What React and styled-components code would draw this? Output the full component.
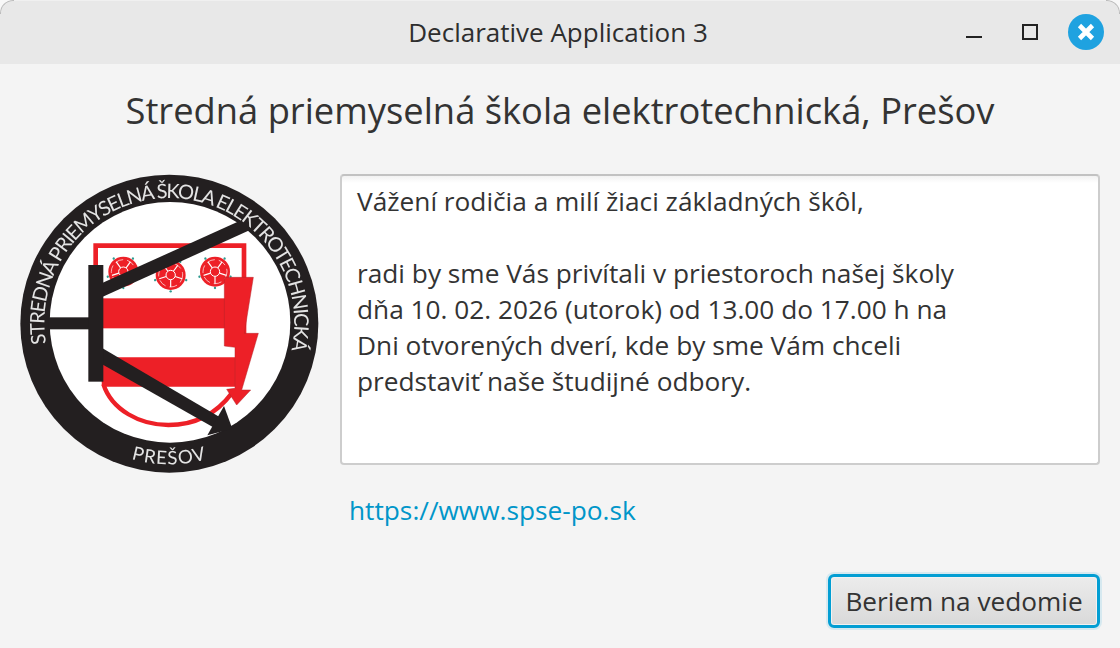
import React from 'react';
import styled, { createGlobalStyle } from 'styled-components';

const GlobalStyle = createGlobalStyle`
  html, body { margin: 0; padding: 0; background: #f8f8f8; }
  * { box-sizing: border-box; }
`;

const Window = styled.div`
  width: 1120px;
  height: 648px;
  display: flex;
  flex-direction: column;
  overflow: hidden;
  background: #f4f4f4;
  border-radius: 13px 13px 0 0;
  font-family: "Open Sans", "Noto Sans", sans-serif;
  color: #333333;
`;

const TitleBar = styled.header`
  position: relative;
  height: 64px;
  flex: none;
  display: grid;
  grid-template-columns: 1fr auto 1fr;
  align-items: center;
  background: #e8e8e8;
  border-top: 1px solid #f0f0f0;

  &::before,
  &::after {
    content: "";
    position: absolute;
    top: -1px;
    width: 13px;
    height: 13px;
    border-top: 1px solid #bbbbbb;
  }
  &::before {
    left: 0;
    border-left: 1px solid #bbbbbb;
    border-top-left-radius: 13px;
  }
  &::after {
    right: 0;
    border-right: 1px solid #bbbbbb;
    border-top-right-radius: 13px;
  }
`;

const WindowTitle = styled.h1`
  grid-column: 2;
  margin: 0 4px 1px 0;
  font-size: 26px;
  font-weight: 400;
  color: #2e2e2e;
`;

const Controls = styled.div`
  grid-column: 3;
  display: flex;
  align-items: center;
  justify-content: flex-end;
  padding-right: 16px;
  margin-bottom: 1px;
`;

const MinimizeButton = styled.span`
  width: 16px;
  height: 2px;
  margin: 9px 40px 0 0;
  background: #222222;
`;

const MaximizeButton = styled.span`
  width: 16px;
  height: 16px;
  margin-right: 30px;
  border: 2px solid #222222;
`;

const CloseButton = styled.span`
  width: 36px;
  height: 36px;
  display: flex;
  align-items: center;
  justify-content: center;
  border-radius: 50%;
  background: #1fa2e0;
`;

const Content = styled.main`
  flex: 1;
  display: flex;
  flex-direction: column;
  padding: 22px 20px 20px;
`;

const Heading = styled.h2`
  margin: 0 0 40px;
  height: 48px;
  line-height: 48px;
  text-align: center;
  font-size: 36.3px;
  font-weight: 400;
  color: #333333;
  white-space: nowrap;
`;

const Body = styled.section`
  display: flex;
  align-items: flex-start;
  gap: 20px;
`;

const Logo = styled.svg`
  width: 300px;
  height: 300px;
  flex: none;
  filter: blur(0.45px);
`;

const Message = styled.div`
  width: 760px;
  height: 291px;
  padding: 7px 15px;
  background: linear-gradient(#f2f2f2 0, #ffffff 7px);
  border: 2px solid #cdcdcd;
  border-top-color: #c2c2c2;
  border-radius: 4px;
  font-size: 26.25px;
  line-height: 36px;
  color: #333333;
`;

const MessageLine = styled.div`
  height: 36px;
  white-space: nowrap;
`;

const LinkRow = styled.div`
  margin-top: 18px;
  padding-left: 329px;
  height: 36px;
  line-height: 36px;
`;

const SchoolLink = styled.a`
  font-size: 26.25px;
  color: #0096c9;
  text-decoration: none;
`;

const Footer = styled.footer`
  margin-top: auto;
  display: flex;
  justify-content: flex-end;
`;

const AckButton = styled.button`
  width: 272px;
  height: 54px;
  padding: 0;
  border: 3px solid #039ed3;
  border-radius: 6px;
  background: linear-gradient(#ececec, #d9d9d9);
  box-shadow: 0 0 0 2px rgba(3, 158, 211, 0.12), inset 0 0 0 1px #f2f2f2;
  font-family: inherit;
  font-size: 26.2px;
  color: #333333;
`;

const RED = '#ed2027';
const INK = '#231f20';

// one heraldic rose of the school crest, drawn around 0,0
function Rose({ x, y }) {
  const angles = [0, 72, 144, 216, 288];
  return (
    <g transform={`translate(${x} ${y})`}>
      <circle r="45" fill={RED} />
      {angles.map((a) => (
        <line key={a} x1="0" y1="-14" x2="0" y2="-36" stroke="#fff" strokeWidth="3.5" transform={`rotate(${a + 36})`} />
      ))}
      <circle r="36" fill="none" stroke="#fff" strokeWidth="2" strokeDasharray="24 12" />
      <circle r="14" fill="none" stroke="#fff" strokeWidth="3" />
      <circle r="8" fill={RED} />
      {angles.map((a) => (
        <circle key={a} cx="0" cy="-49" r="3.5" fill="#2f9a8f" transform={`rotate(${a + 36})`} />
      ))}
    </g>
  );
}

function SchoolLogo() {
  return (
    <Logo viewBox="60 42 900 900">
      <defs>
        <path id="ring-top" d="M 138 551 A 375 375 0 1 1 873 575" />
        <path id="ring-bottom" d="M 372 890 A 414 414 0 0 0 644 890" />
      </defs>
      <circle cx="508" cy="491" r="447" fill={INK} />
      <circle cx="510" cy="487" r="361" fill="#fff" />

      <path d="M287 350 V257 H732 V560" fill="none" stroke={RED} strokeWidth="14" />
      <path d="M310 672 C335 750 420 795 505 795 C590 795 650 760 695 700" fill="none" stroke={RED} strokeWidth="13" />
      <rect x="300" y="415" width="375" height="90" fill={RED} />
      <path d="M300 592 H706 V680 H306 Z" fill={RED} />

      <Rose x={370} y={335} />
      <Rose x={512} y={345} />
      <Rose x={645} y={335} />

      <polygon
        points="673,352 760,352 733,520 775,520 725,690 752,690 710,735 680,688 705,685 705,562 673,558"
        fill={RED}
        stroke="#b5252a"
        strokeWidth="1.5"
      />

      <rect x="145" y="472" width="125" height="36" fill={INK} />
      <polygon points="305,370 725,180 750,210 305,412" fill={INK} />
      <polygon points="305,563 665,775 645,805 305,612" fill={INK} />
      <polygon points="672,738 697,806 622,826" fill={INK} />
      <rect x="265" y="315" width="45" height="350" fill={INK} />

      <text fontFamily="Lato, 'Liberation Sans', sans-serif" fontSize="60" fill="#e4e4e4">
        <textPath href="#ring-top" textLength="1322" lengthAdjust="spacing">
          STREDNÁ PRIEMYSELNÁ ŠKOLA ELEKTROTECHNICKÁ
        </textPath>
      </text>
      <text fontFamily="Lato, 'Liberation Sans', sans-serif" fontSize="56" fill="#e4e4e4" textAnchor="middle" letterSpacing="3">
        <textPath href="#ring-bottom" startOffset="50%">
          PREŠOV
        </textPath>
      </text>
    </Logo>
  );
}

const messageLines = [
  'Vážení rodičia a milí žiaci základných škôl,',
  '',
  'radi by sme Vás privítali v priestoroch našej školy',
  'dňa 10. 02. 2026 (utorok) od 13.00 do 17.00 h na',
  'Dni otvorených dverí, kde by sme Vám chceli',
  'predstaviť naše študijné odbory.',
];

export default function App() {
  return (
    <Window>
      <GlobalStyle />
      <TitleBar>
        <WindowTitle>Declarative Application 3</WindowTitle>
        <Controls>
          <MinimizeButton />
          <MaximizeButton />
          <CloseButton>
            <svg width="18" height="18" viewBox="0 0 18 18">
              <path d="M2.5 2.5 L15.5 15.5 M15.5 2.5 L2.5 15.5" stroke="#fff" strokeWidth="4.6" />
            </svg>
          </CloseButton>
        </Controls>
      </TitleBar>
      <Content>
        <Heading>Stredná priemyselná škola elektrotechnická, Prešov</Heading>
        <Body>
          <SchoolLogo />
          <div>
            <Message>
              {messageLines.map((line, i) => (
                <MessageLine key={i}>{line}</MessageLine>
              ))}
            </Message>
          </div>
        </Body>
        <LinkRow>
          <SchoolLink href="#">https://www.spse-po.sk</SchoolLink>
        </LinkRow>
        <Footer>
          <AckButton>Beriem na vedomie</AckButton>
        </Footer>
      </Content>
    </Window>
  );
}
